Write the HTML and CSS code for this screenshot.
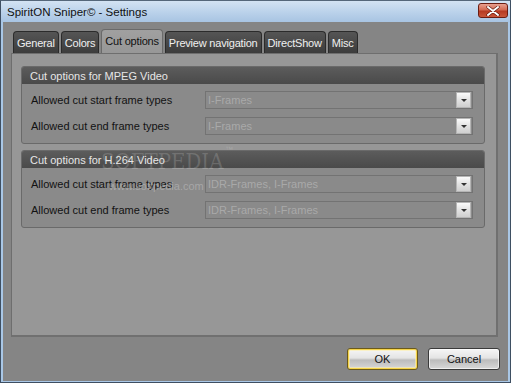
FILE: index.html
```html
<!DOCTYPE html>
<html lang="en">
<head>
  <meta charset="UTF-8">
  <title>SpiritON Sniper© - Settings</title>
  <link rel="stylesheet" href="styles.css">
</head>
<body>
  <div class="window">
    <!-- Title bar -->
    <div class="titlebar">
      <span class="title">SpiritON Sniper© - Settings</span>
      <button class="close" aria-label="Close">
        <svg width="14" height="10" viewBox="0 0 14 10">
          <path d="M2 1 L12 9 M12 1 L2 9" stroke="#5a1208" stroke-width="3.2" stroke-linecap="round"/>
          <path d="M2 1 L12 9 M12 1 L2 9" stroke="#fff" stroke-width="2" stroke-linecap="round"/>
        </svg>
      </button>
    </div>

    <div class="client">
      <!-- Tabs -->
      <div class="tabs">
        <div class="tab">General</div>
        <div class="tab">Colors</div>
        <div class="tab active">Cut options</div>
        <div class="tab">Preview navigation</div>
        <div class="tab">DirectShow</div>
        <div class="tab">Misc</div>
      </div>

      <div class="tab-page">
        <section class="group">
          <div class="group-head">Cut options for MPEG Video</div>
          <div class="group-body">
            <div class="row">
              <span class="label">Allowed cut start frame types</span>
              <div class="combo"><span>I-Frames</span><i class="drop"></i></div>
            </div>
            <div class="row">
              <span class="label">Allowed cut end frame types</span>
              <div class="combo"><span>I-Frames</span><i class="drop"></i></div>
            </div>
          </div>
        </section>

        <section class="group">
          <div class="group-head">Cut options for H.264 Video</div>
          <div class="group-body">
            <div class="row">
              <span class="label">Allowed cut start frame types</span>
              <div class="combo"><span>IDR-Frames, I-Frames</span><i class="drop"></i></div>
            </div>
            <div class="row">
              <span class="label">Allowed cut end frame types</span>
              <div class="combo"><span>IDR-Frames, I-Frames</span><i class="drop"></i></div>
            </div>
          </div>
        </section>
      </div>

      <!-- Buttons -->
      <div class="actions">
        <button class="btn default">OK</button>
        <button class="btn">Cancel</button>
      </div>
    </div>

    <!-- watermark -->
    <div class="watermark">
      <span class="wm-big">SOFTPEDIA</span><span class="wm-tm">™</span>
      <span class="wm-small">www.softpedia.com</span>
    </div>
  </div>
</body>
</html>
```

FILE: styles.css
```css
* {
  box-sizing: border-box;
}

body {
  margin: 0;
  font-family: 'Liberation Sans', Arial, sans-serif;
  font-size: 11px;
  background: #fff;
}

.window {
  position: relative;
  width: 511px;
  height: 383px;
  display: flex;
  flex-direction: column;
  border: 1px solid #3e4f62;
  border-top-color: #55677a;
  background: #a9c7e6;
  overflow: hidden;
}

.titlebar {
  height: 21px;
  display: flex;
  align-items: center;
  justify-content: space-between;
  padding: 0 2px 0 6px;
  background: linear-gradient(#d3e3f3, #bcd3eb 50%, #a8c4e2);
}

.title {
  color: #111;
  font-size: 11.5px;
}

.close {
  width: 30px;
  height: 15px;
  margin-top: -2px;
  padding: 0;
  display: flex;
  align-items: center;
  justify-content: center;
  border: 1px solid #6b1d12;
  border-radius: 3px;
  background: linear-gradient(#e8a090, #d36a52 45%, #b63a22 55%, #c9573a);
}

.client {
  flex: 1;
  display: flex;
  flex-direction: column;
  margin: 0 2px 1px;
  padding: 7px 8px 10px 8px;
  background: #858585;
}

.tabs {
  display: flex;
  gap: 2px;
  height: 24px;
  padding-left: 2px;
  align-items: flex-end;
}

.tab {
  height: 22px;
  padding: 0 3px;
  display: flex;
  align-items: center;
  letter-spacing: -0.2px;
  color: #f0f0f0;
  background: linear-gradient(#555, #3c3c3c);
  border: 1px solid #2b2b2b;
  border-bottom: none;
  border-radius: 4px 4px 0 0;
}

.tab.active {
  height: 24px;
  color: #111;
  background: linear-gradient(#a0a0a0, #979797);
  border-color: #6a6a6a;
  padding-bottom: 2px;
}

.tab-page {
  height: 284px;
  margin-right: 2px;
  padding: 12px 11px 0 9px;
  display: flex;
  flex-direction: column;
  gap: 6px;
  background: #979797;
  border: 1px solid #6e6e6e;
  border-right: 2px solid #707070;
  border-bottom: 2px solid #707070;
}

.group {
  border: 1px solid #6a6a6a;
  border-radius: 3px;
  background: #8a8a8a;
  overflow: hidden;
}

.group-head {
  height: 17px;
  padding-left: 8px;
  display: flex;
  align-items: center;
  color: #e6e6e6;
  background: linear-gradient(#5c5c5c, #4a4a4a);
}

.group-body {
  padding: 7px 11px 8px 9px;
  display: flex;
  flex-direction: column;
  gap: 8px;
}

.row {
  display: grid;
  grid-template-columns: 174px 1fr;
  align-items: center;
}

.label {
  color: #121212;
}

.combo {
  height: 18px;
  display: flex;
  align-items: center;
  justify-content: space-between;
  padding: 0 1px 0 2px;
  border: 1px solid #737373;
  color: #a9a9a9;
}

.drop {
  width: 15px;
  height: 16px;
  display: flex;
  align-items: center;
  justify-content: center;
  border: 1px solid #b5b5b5;
  background: linear-gradient(#fbfbfb, #e2e2e2 50%, #cfcfcf);
}

.drop::after {
  content: '';
  border-left: 3px solid transparent;
  border-right: 3px solid transparent;
  border-top: 3px solid #333;
  margin-top: 1px;
}

.actions {
  margin-top: 11px;
  display: flex;
  justify-content: flex-end;
  gap: 10px;
}

.btn {
  width: 72px;
  height: 22px;
  padding: 0;
  font-family: 'Liberation Sans', Arial, sans-serif;
  font-size: 11px;
  color: #111;
  border: 1px solid #3a3a3a;
  border-radius: 3px;
  background: linear-gradient(#f6f6f6, #e4e4e4 45%, #bcbcbc 55%, #d8d8d8);
  box-shadow: inset 0 0 0 1px rgba(255, 255, 255, 0.6);
}

.btn.default {
  width: 71px;
  border-color: #6b5a1a;
  box-shadow: inset 0 0 0 1px #f6d44a, inset 0 0 0 2px rgba(255, 240, 170, 0.6);
}

.watermark {
  position: absolute;
  left: 100px;
  top: 148px;
  pointer-events: none;
  color: rgba(255, 255, 255, 0.16);
}

.wm-big {
  font-family: 'DejaVu Serif Condensed', 'DejaVu Serif', serif;
  font-size: 22px;
}

.wm-tm {
  position: absolute;
  left: 124px;
  top: -4px;
  font-size: 8px;
}

.wm-small {
  position: absolute;
  left: 8px;
  top: 31px;
  font-size: 11px;
  white-space: nowrap;
  color: rgba(255, 255, 255, 0.26);
}
```
